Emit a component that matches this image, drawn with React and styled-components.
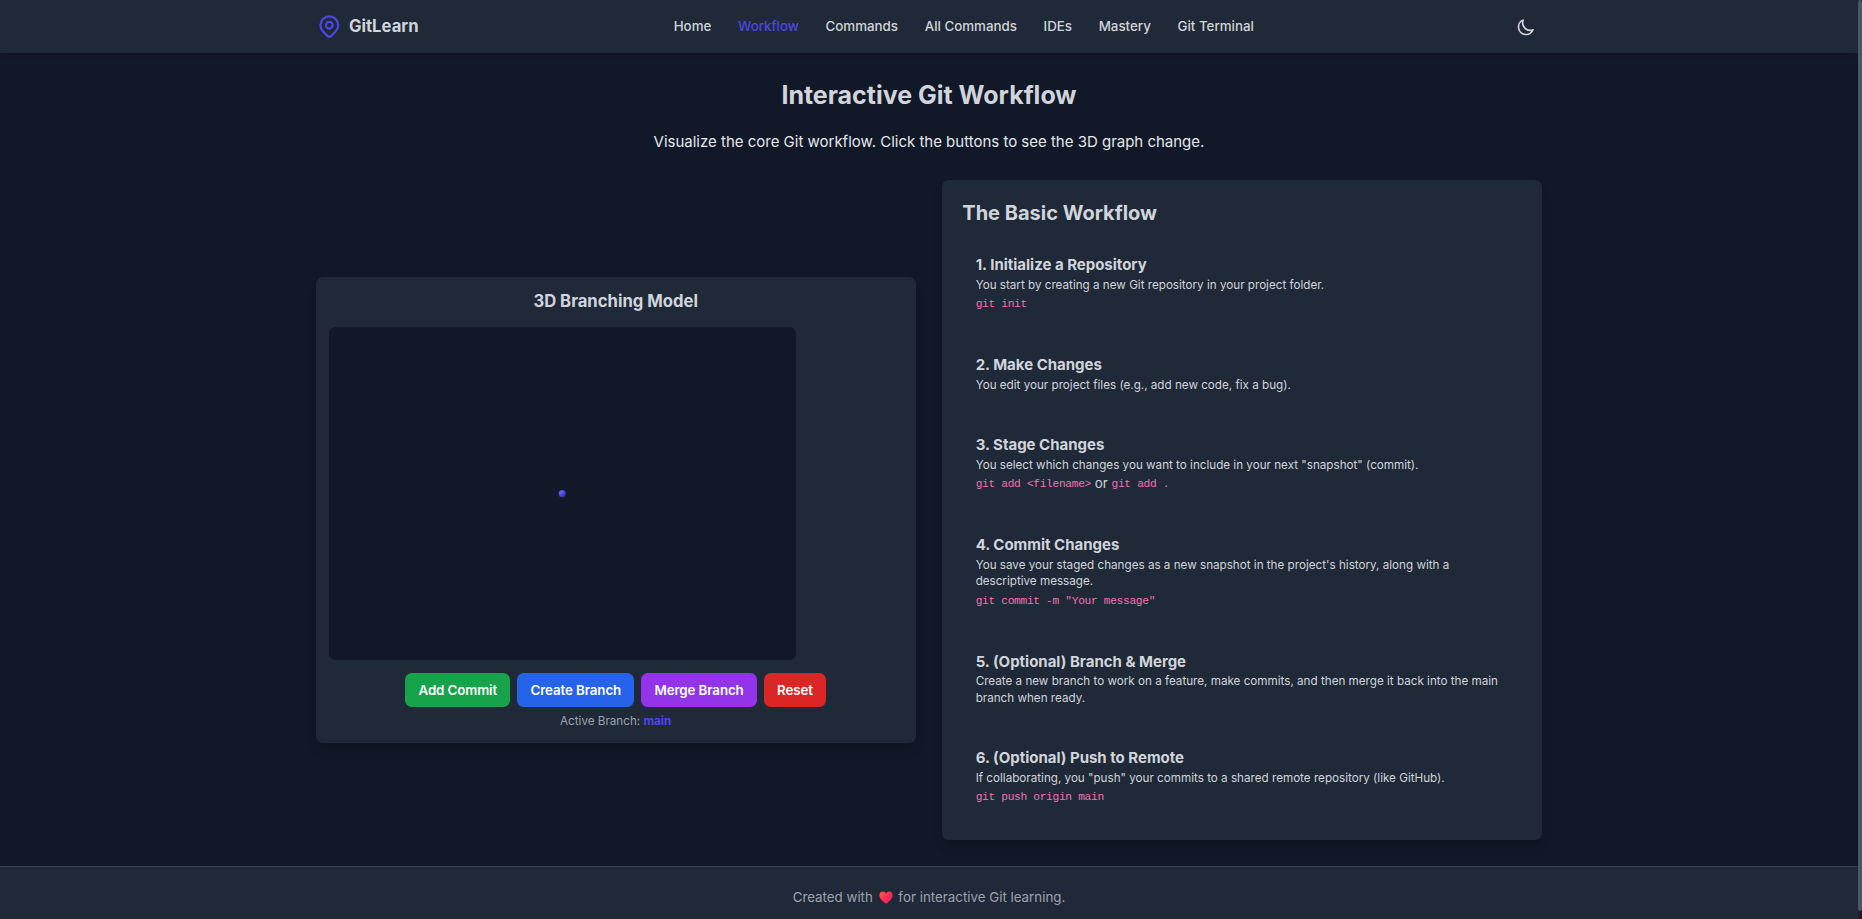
import React, { useState } from "react";
import styled, { createGlobalStyle, css } from "styled-components";

const color = {
  page: "#111827",
  surface: "#1f2937",
  line: "#374151",
  text: "#d1d5db",
  muted: "#9ca3af",
  primary: "#4f46e5",
  code: "#f472b6",
};

const GlobalStyle = createGlobalStyle`
  *, *::before, *::after { box-sizing: border-box; margin: 0; padding: 0; }
  html { font-size: 13.3333px; }
  body {
    background: ${color.page};
    color: ${color.text};
    font-family: Inter, "Liberation Sans", sans-serif;
    font-size: 1rem;
    line-height: 1.5;
    overflow: hidden;
  }
`;

const Frame = styled.div`
  display: flex;
  height: 100vh;
  overflow: hidden;
`;

const Page = styled.div`
  flex: 1;
  min-width: 0;
  overflow: hidden;
`;

const ScrollTrack = styled.div`
  width: 4px;
  background: #1f1a2e;
`;

const ScrollThumb = styled.div`
  height: 911px;
  border-radius: 3px;
  background: #4a5568;
`;

const Container = styled.div`
  width: 100%;
  max-width: 96rem;
  margin: 0 auto;
  padding: 0 2rem;
`;

const Header = styled.header`
  background: ${color.surface};
  box-shadow: 0 0.25rem 0.375rem -1px rgba(0, 0, 0, 0.1), 0 0.125rem 0.25rem -2px rgba(0, 0, 0, 0.1);
`;

const HeaderBar = styled(Container)`
  display: flex;
  align-items: center;
  justify-content: space-between;
  height: 4rem;
`;

const Brand = styled.a`
  display: flex;
  align-items: center;
  gap: 0.5rem;
  font-size: 1.25rem;
  font-weight: 700;
  line-height: 1.75rem;
`;

const BrandName = styled.span`
  padding-top: 1px;
`;

const PinIcon = styled.svg`
  width: 2rem;
  height: 2rem;
  fill: none;
  stroke: ${color.primary};
  stroke-width: 2;
  stroke-linecap: round;
  stroke-linejoin: round;
`;

const Nav = styled.nav`
  display: flex;
  gap: 2rem;
  padding-top: 1px;
`;

const NavLink = styled.a`
  font-weight: 500;
  color: ${(p) => (p.$active ? color.primary : color.text)};
`;

const ThemeButton = styled.button`
  display: flex;
  padding: 0.5rem;
  border: 0;
  border-radius: 50%;
  background: transparent;
  color: ${color.text};
`;

const MoonIcon = styled.svg`
  width: 1.5rem;
  height: 1.5rem;
  fill: none;
  stroke: currentColor;
  stroke-width: 2;
  stroke-linecap: round;
  stroke-linejoin: round;
`;

const Main = styled(Container).attrs({ as: "main" })`
  padding-top: 2rem;
  padding-bottom: 2rem;
`;

const PageTitle = styled.h2`
  margin-bottom: 1.5rem;
  font-size: 1.875rem;
  line-height: 2.25rem;
  font-weight: 700;
  text-align: center;
`;

const Lead = styled.p`
  margin-bottom: 2rem;
  font-size: 1.125rem;
  line-height: 1.75rem;
  text-align: center;
  color: #e5e7eb;
`;

const Columns = styled.div`
  display: grid;
  grid-template-columns: 1fr 1fr;
  gap: 2rem;
  align-items: center;
`;

const card = css`
  background: ${color.surface};
  border-radius: 0.5rem;
  box-shadow: 0 0.625rem 0.9375rem -0.1875rem rgba(0, 0, 0, 0.1), 0 0.25rem 0.375rem -0.25rem rgba(0, 0, 0, 0.1);
`;

const ModelCard = styled.section`
  ${card}
  padding: 1rem;
`;

const ModelTitle = styled.h3`
  margin-bottom: 1rem;
  font-size: 1.25rem;
  line-height: 1.75rem;
  font-weight: 700;
  text-align: center;
`;

const Stage = styled.svg`
  display: block;
  width: 35rem;
  height: 25rem;
  border-radius: 0.5rem;
  background: ${color.page};
`;

const Actions = styled.div`
  display: flex;
  justify-content: center;
  gap: 0.5rem;
  margin-top: 1rem;
`;

const tones = {
  green: "#16a34a",
  blue: "#2563eb",
  purple: "#9333ea",
  red: "#dc2626",
};

const ActionButton = styled.button`
  padding: 0.5rem 1rem;
  border: 0;
  border-radius: 0.5rem;
  background: ${(p) => tones[p.$tone]};
  color: #fff;
  font: 600 1rem/1.5rem Inter, "Liberation Sans", sans-serif;
  letter-spacing: -0.1px;
`;

const BranchStatus = styled.p`
  margin-top: 0.5rem;
  font-size: 0.875rem;
  line-height: 1.25rem;
  text-align: center;
  color: ${color.muted};
`;

const BranchName = styled.span`
  font-weight: 700;
  color: ${color.primary};
`;

const StepsCard = styled.section`
  ${card}
  padding: 1.5rem;
`;

const StepsTitle = styled.h3`
  margin-bottom: 1rem;
  font-size: 1.5rem;
  line-height: 2rem;
  font-weight: 700;
`;

const StepList = styled.div`
  display: flex;
  flex-direction: column;
  gap: 1rem;
`;

const Step = styled.div`
  padding: 1rem;
`;

const StepTitle = styled.h4`
  font-size: 1.125rem;
  line-height: 1.75rem;
  font-weight: 700;
`;

const StepText = styled.p`
  font-size: 0.875rem;
  line-height: 1.25rem;
`;

const Commands = styled.div`
  height: 1.5rem;
  line-height: 1.5rem;
`;

const Code = styled.code`
  font-family: "Liberation Mono", monospace;
  font-size: 0.84rem;
  letter-spacing: -0.305px;
  line-height: 1.25rem;
  vertical-align: 1px;
  color: ${color.code};
`;

const Footer = styled.footer`
  padding: calc(1.5rem + 0.5px) 0 1.5rem;
  border-top: 1px solid ${color.line};
  background: ${color.surface};
  color: ${color.muted};
  text-align: center;
`;

const HeartIcon = styled.svg`
  width: 14px;
  height: 13px;
  margin: 0 2px;
  vertical-align: -2px;
`;

const links = ["Home", "Workflow", "Commands", "All Commands", "IDEs", "Mastery", "Git Terminal"];

const steps = [
  {
    title: "1. Initialize a Repository",
    text: "You start by creating a new Git repository in your project folder.",
    commands: ["git init"],
  },
  {
    title: "2. Make Changes",
    text: "You edit your project files (e.g., add new code, fix a bug).",
  },
  {
    title: "3. Stage Changes",
    text: 'You select which changes you want to include in your next "snapshot" (commit).',
    commands: ["git add <filename>", "git add ."],
  },
  {
    title: "4. Commit Changes",
    text: "You save your staged changes as a new snapshot in the project's history, along with a descriptive message.",
    commands: ['git commit -m "Your message"'],
  },
  {
    title: "5. (Optional) Branch & Merge",
    text: "Create a new branch to work on a feature, make commits, and then merge it back into the main branch when ready.",
  },
  {
    title: "6. (Optional) Push to Remote",
    text: 'If collaborating, you "push" your commits to a shared remote repository (like GitHub).',
    commands: ["git push origin main"],
  },
];

const actions = [
  ["Add Commit", "green"],
  ["Create Branch", "blue"],
  ["Merge Branch", "purple"],
  ["Reset", "red"],
];

export default function App() {
  const [active, setActive] = useState("Workflow");

  return (
    <Frame>
      <GlobalStyle />
      <Page>
        <Header>
          <HeaderBar>
            <Brand>
              <PinIcon viewBox="0 0 24 24">
                <path d="M17.657 16.657L13.414 20.9a1.998 1.998 0 01-2.827 0l-4.244-4.243a8 8 0 1111.314 0z" />
                <path d="M15 11a3 3 0 11-6 0 3 3 0 016 0z" />
              </PinIcon>
              <BrandName>GitLearn</BrandName>
            </Brand>
            <Nav>
              {links.map((name) => (
                <NavLink key={name} $active={name === active} onClick={() => setActive(name)}>
                  {name}
                </NavLink>
              ))}
            </Nav>
            <ThemeButton aria-label="Toggle theme">
              <MoonIcon viewBox="0 0 24 24">
                <path d="M20.354 15.354A9 9 0 018.646 3.646 9.003 9.003 0 0012 21a9.003 9.003 0 008.354-5.646z" />
              </MoonIcon>
            </ThemeButton>
          </HeaderBar>
        </Header>

        <Main>
          <PageTitle>Interactive Git Workflow</PageTitle>
          <Lead>Visualize the core Git workflow. Click the buttons to see the 3D graph change.</Lead>
          <Columns>
            <ModelCard>
              <ModelTitle>3D Branching Model</ModelTitle>
              <Stage viewBox="0 0 560 400">
                <defs>
                  <radialGradient id="commit" cx="0.3" cy="0.3" r="0.8">
                    <stop offset="0" stopColor="#6a60ff" />
                    <stop offset="0.5" stopColor="#5147e0" />
                    <stop offset="1" stopColor="#2c2780" />
                  </radialGradient>
                </defs>
                <circle cx="280" cy="200" r="4.4" fill="url(#commit)" />
              </Stage>
              <Actions>
                {actions.map(([label, tone]) => (
                  <ActionButton key={label} $tone={tone}>
                    {label}
                  </ActionButton>
                ))}
              </Actions>
              <BranchStatus>
                Active Branch: <BranchName>main</BranchName>
              </BranchStatus>
            </ModelCard>

            <StepsCard>
              <StepsTitle>The Basic Workflow</StepsTitle>
              <StepList>
                {steps.map((step) => (
                  <Step key={step.title}>
                    <StepTitle>{step.title}</StepTitle>
                    <StepText>{step.text}</StepText>
                    {step.commands && (
                      <Commands>
                        {step.commands.map((command, i) => (
                          <React.Fragment key={command}>
                            {i > 0 && " or "}
                            <Code>{command}</Code>
                          </React.Fragment>
                        ))}
                      </Commands>
                    )}
                  </Step>
                ))}
              </StepList>
            </StepsCard>
          </Columns>
        </Main>

        <Footer>
          Created with{" "}
          <HeartIcon viewBox="0 0 14 13">
            <defs>
              <linearGradient id="heart" x1="0" y1="0" x2="1" y2="1">
                <stop offset="0" stopColor="#ff5a4f" />
                <stop offset="0.55" stopColor="#fb2c52" />
                <stop offset="1" stopColor="#e5187a" />
              </linearGradient>
            </defs>
            <path
              d="M7 12.8C5.2 11.3 .4 8 .4 4.2C.4 2.2 1.9 .5 3.8 .5C5.2 .5 6.4 1.3 7 2.5C7.6 1.3 8.8 .5 10.2 .5C12.1 .5 13.6 2.2 13.6 4.2C13.6 8 8.8 11.3 7 12.8Z"
              fill="url(#heart)"
            />
          </HeartIcon>{" "}
          for interactive Git learning.
        </Footer>
      </Page>
      <ScrollTrack>
        <ScrollThumb />
      </ScrollTrack>
    </Frame>
  );
}
